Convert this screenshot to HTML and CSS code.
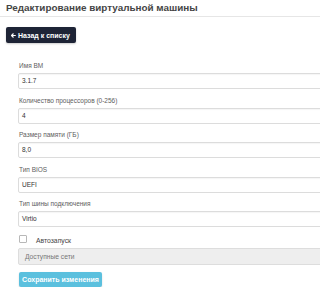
FILE: index.html
```html
<!DOCTYPE html>
<html lang="ru">
<head>
<meta charset="utf-8">
<title>Редактирование виртуальной машины</title>
<link rel="stylesheet" href="styles.css">
</head>
<body>
<div class="page">
<h1 class="title">Редактирование виртуальной машины</h1>
<a class="btn-back" href="#">
  <svg class="arrow" viewBox="0 0 10 10" width="5" height="5"><path d="M5 1 L1 5 L5 9 M1 5 H9.5" fill="none" stroke="#fff" stroke-width="2.2" stroke-linejoin="round"/></svg>
  <span>Назад к списку</span>
</a>
<form class="form">
  <div class="group">
    <label class="label">Имя ВМ</label>
    <div class="input">3.1.7</div>
  </div>
  <div class="group">
    <label class="label">Количество процессоров (0-256)</label>
    <div class="input">4</div>
  </div>
  <div class="group">
    <label class="label">Размер памяти (ГБ)</label>
    <div class="input">8,0</div>
  </div>
  <div class="group">
    <label class="label">Тип BIOS</label>
    <div class="input">UEFI</div>
  </div>
  <div class="group">
    <label class="label">Тип шины подключения</label>
    <div class="input">Virtio</div>
  </div>
  <div class="check-row">
    <span class="checkbox"></span>
    <span class="check-text">Автозапуск</span>
  </div>
  <div class="networks">Доступные сети</div>
  <button type="button" class="btn-save">Сохранить изменения</button>
</form>
</div>
</body>
</html>
```
FILE: styles.css
```css
html, body {
  margin: 0;
  padding: 0;
  background: #fff;
}
body {
  font-family: "Liberation Sans", Arial, sans-serif;
  color: #333;
}
.page {
  width: 100%;
  overflow: hidden;
}
.title {
  margin: 0;
  padding: 2px 6px 3px;
  font-size: 9.9px;
  line-height: 11px;
  font-weight: bold;
  color: #454545;
  border-bottom: 1px solid #e6e6e6;
  white-space: nowrap;
}
.btn-back {
  display: inline-flex;
  align-items: center;
  gap: 2px;
  margin: 10px 0 0 6px;
  height: 16px;
  padding: 0 6px 0 5px;
  box-sizing: border-box;
  background: #1e2436;
  color: #fff;
  font-size: 7px;
  font-weight: bold;
  text-decoration: none;
  border-radius: 2px;
  box-shadow: 0 1px 2px rgba(0,0,0,0.2);
}
.arrow { display: block; }
.form {
  margin: 18px 0 0 18px;
  width: calc(100% + 20px);
}
.group {
  margin-bottom: 6.5px;
}
.label {
  display: block;
  padding-left: 1px;
  font-size: 6.5px;
  line-height: 9px;
  color: #5e5e5e;
  margin-bottom: 3px;
}
.input {
  height: 16px;
  box-sizing: border-box;
  border: 1px solid #dcdcdc;
  border-radius: 2px;
  padding: 0 3px;
  font-size: 6.5px;
  line-height: 14px;
  color: #333;
  box-shadow: inset 0 1px 1px rgba(0,0,0,0.04);
}
.check-row {
  display: flex;
  align-items: center;
  height: 10px;
  margin-bottom: 4px;
}
.checkbox {
  width: 6px;
  height: 6px;
  margin-left: 1px;
  border: 1px solid #b8b8b8;
  border-radius: 1px;
  background: #fff;
}
.check-text {
  margin-left: 9px;
  padding-top: 3px;
  font-size: 6.8px;
  color: #444;
}
.networks {
  height: 17px;
  box-sizing: border-box;
  background: #eeeeee;
  border: 1px solid #dddddd;
  border-radius: 2px;
  padding-left: 6px;
  font-size: 6.7px;
  line-height: 15px;
  color: #777;
}
.btn-save {
  display: block;
  margin: 7px 0 0 1px;
  width: 83px;
  height: 15px;
  padding: 0;
  border: none;
  background: #5bc0de;
  color: #fff;
  font-family: "Liberation Sans", Arial, sans-serif;
  font-size: 7px;
  font-weight: bold;
  border-radius: 2px;
  box-shadow: 0 1px 2px rgba(0,0,0,0.15);
}
```
